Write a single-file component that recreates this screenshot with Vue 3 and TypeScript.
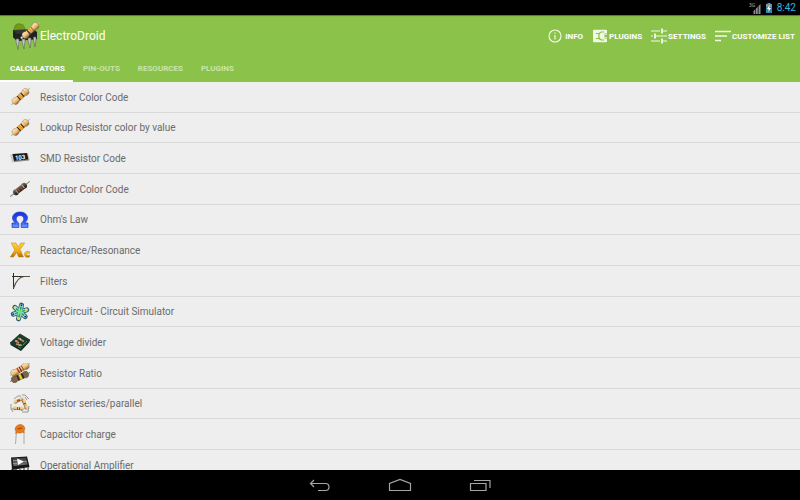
<script setup lang="ts">
import { ref } from 'vue'

interface Entry {
  icon: string
  label: string
}

const tabs: string[] = ['Calculators', 'Pin-outs', 'Resources', 'Plugins']
const activeTab = ref<string>('Calculators')

const actions: Entry[] = [
  { icon: 'info', label: 'Info' },
  { icon: 'plugins', label: 'Plugins' },
  { icon: 'settings', label: 'Settings' },
  { icon: 'sort', label: 'Customize list' },
]

const entries: Entry[] = [
  { icon: 'resistor', label: 'Resistor Color Code' },
  { icon: 'resistor', label: 'Lookup Resistor color by value' },
  { icon: 'smd', label: 'SMD Resistor Code' },
  { icon: 'inductor', label: 'Inductor Color Code' },
  { icon: 'ohm', label: "Ohm's Law" },
  { icon: 'reactance', label: 'Reactance/Resonance' },
  { icon: 'filter', label: 'Filters' },
  { icon: 'circuit', label: 'EveryCircuit - Circuit Simulator' },
  { icon: 'divider', label: 'Voltage divider' },
  { icon: 'ratio', label: 'Resistor Ratio' },
  { icon: 'series', label: 'Resistor series/parallel' },
  { icon: 'capacitor', label: 'Capacitor charge' },
  { icon: 'opamp', label: 'Operational Amplifier' },
]
</script>

<template>
  <div class="screen">
    <svg class="defs" aria-hidden="true">
      <defs>
        <linearGradient id="tan" x1="0" y1="0" x2="0" y2="1">
          <stop offset="0" stop-color="#ffe9ba" />
          <stop offset="0.55" stop-color="#edc07f" />
          <stop offset="1" stop-color="#80592c" />
        </linearGradient>
        <linearGradient id="dark" x1="0" y1="0" x2="0" y2="1">
          <stop offset="0" stop-color="#8a7a6c" />
          <stop offset="0.5" stop-color="#4a3d35" />
          <stop offset="1" stop-color="#1c1512" />
        </linearGradient>
        <linearGradient id="blue" x1="0" y1="0" x2="0" y2="1">
          <stop offset="0" stop-color="#1a2ee0" />
          <stop offset="0.6" stop-color="#2b55ff" />
          <stop offset="1" stop-color="#6f9bff" />
        </linearGradient>
        <linearGradient id="gold" x1="0" y1="0" x2="0" y2="1">
          <stop offset="0" stop-color="#ffd530" />
          <stop offset="0.6" stop-color="#f2a912" />
          <stop offset="1" stop-color="#b06a08" />
        </linearGradient>
        <linearGradient id="chip" x1="0" y1="0" x2="0" y2="1">
          <stop offset="0" stop-color="#3a3a3a" />
          <stop offset="1" stop-color="#777" />
        </linearGradient>
        <g id="bone">
          <path d="M-12.500 0H12.500" stroke="#b5b5b0" stroke-width="1" />
          <path d="M-10 0C-10-3.800-6.500-4.200-4.200-2.600H4.200C6.500-4.200 10-3.800 10 0S6.500 4.200 4.200 2.600H-4.200C-6.500 4.200-10 3.800-10 0Z" fill="url(#tan)" stroke="#8b6838" stroke-width="0.400" />
        </g>
      </defs>
    </svg>

    <div class="status">
      <svg class="signal" viewBox="0 0 12 12" aria-hidden="true">
        <text x="0" y="5" class="network">3G</text>
        <path d="M11.500 2V12H9.500V4ZM8.800 4.700V12H7V6.500ZM6.400 7V12H4.500V9Z" fill="#8c8c8c" />
      </svg>
      <svg class="battery" viewBox="0 0 8 12" aria-hidden="true">
        <path d="M2.500 1H5.500V2H7V11H1V2H2.500Z" fill="#74919c" />
        <path d="M1 5H7V11H1Z" fill="#2a89b0" />
        <path d="M4.800 2.800L2 7H3.800L3.200 10L6 6H4.200Z" fill="#fff" />
      </svg>
      <time>8:42</time>
    </div>

    <header class="header">
      <div class="toolbar">
        <h1 class="brand">
          <svg class="logo" viewBox="0 0 28 28" aria-hidden="true">
            <path d="M2 9C2 3 5 1 8 2C11 2 13 5 13 8Z" fill="#719b19" stroke="#56780f" stroke-width="0.600" />
            <path d="M5 4L4 2M10 4L11 2" stroke="#6e9618" />
            <path d="M1 8L22 7L25 10V17L5 19L1 15Z" fill="#343535" />
            <path d="M1 8L5 12L25 10V17L5 19L1 15Z" fill="#202222" />
            <path d="M4 17V20L6 27.500L7 20V17ZM10 17V20L12 27L13 20V17ZM16 16V19L18 26L19 19V16ZM21.500 15V18L23 25L24 18V15Z" fill="#c2c6bd" stroke="#5d615c" stroke-width="0.600" />
            <g transform="translate(18.500 8.500) rotate(-42)">
              <use href="#bone" />
              <path d="M-2.500-2.400V2.400" stroke="#343026" stroke-width="1.300" />
              <path d="M0-2.400V2.400" stroke="#f09c15" stroke-width="1.800" />
              <path d="M2.400-2.400V2.400" stroke="#b26920" />
            </g>
            <circle cx="9.500" cy="15.500" r="1" fill="#ddd" />
          </svg>
          <span>ElectroDroid</span>
        </h1>
        <div class="actions">
          <button v-for="action in actions" :key="action.label" class="action" type="button">
            <svg class="action-icon" viewBox="0 0 16 16" aria-hidden="true">
              <g v-if="action.icon === 'info'" fill="none" stroke="#f4faec">
                <circle cx="7" cy="8" r="6" stroke-width="1.100" />
                <path d="M7 7V11.500M7 4.500V5.700" stroke-width="1.200" />
              </g>
              <g v-else-if="action.icon === 'plugins'">
                <path d="M2 1.700H14Q15 1.700 15 2.700V5H12.500V11H15V13.300Q15 14.300 14 14.300H2Q1 14.300 1 13.300V2.700Q1 1.700 2 1.700Z" fill="#f0f7e7" />
                <path d="M4 5.500H6.800M4 10.500H6.800M12 4H9.500Q6.800 4.500 6.800 8T9.500 12H12" fill="none" stroke="#8bc34a" stroke-width="1.200" />
                <path d="M12.500 6.200H15M12.500 9.800H15" stroke="#f0f7e7" stroke-width="1.300" />
              </g>
              <g v-else-if="action.icon === 'settings'" fill="none" stroke="#f4faec">
                <path d="M0 3H9M12 3H16M0 8H2M5 8H16M0 13H9M12 13H16" stroke-width="1.200" />
                <path d="M11 0.500V5.500M4 5.500V10.500M11 10.500V15.500" stroke-width="1.800" />
              </g>
              <path v-else d="M0 3.500H16M0 8H12M0 12.500H6" fill="none" stroke="#f4faec" stroke-width="1.600" />
            </svg>
            <span>{{ action.label }}</span>
          </button>
        </div>
      </div>
      <nav class="tabs" aria-label="Sections">
        <button
          v-for="tab in tabs"
          :key="tab"
          type="button"
          class="tab"
          :class="{ active: tab === activeTab }"
          @click="activeTab = tab"
        >
          {{ tab }}
        </button>
      </nav>
    </header>

    <main class="content">
      <ul class="list">
        <li v-for="entry in entries" :key="entry.label" class="item">
          <button class="entry" type="button">
            <svg class="entry-icon" viewBox="0 0 20 20" aria-hidden="true">
              <g v-if="entry.icon === 'resistor'" transform="translate(10.500 9.500) rotate(-42)">
                <use href="#bone" />
                <path d="M-2.200-2.500V2.500M2.500-2.500V2.500" stroke="#352411" stroke-width="1.200" />
                <path d="M0-2.600V2.600" stroke="#f49b12" stroke-width="2.200" />
                <path d="M6-3V3" stroke="#d9a548" stroke-width="0.800" />
              </g>
              <g v-else-if="entry.icon === 'smd'">
                <path d="M0 6.500L18 5L20 12L2 14.500Z" fill="#c9cac8" />
                <path d="M2.500 6L17 5L18.500 11.500L4 13Z" fill="#191919" />
                <text x="5" y="11.500" class="smd-code" transform="rotate(-5 10 10)">103</text>
                <path d="M4 13.500L19 12" stroke="#777" stroke-width="0.800" />
              </g>
              <g v-else-if="entry.icon === 'inductor'" transform="translate(10 10) rotate(-38)">
                <path d="M-12.500 0H12.500" stroke="#777" />
                <path d="M-8 0C-8-3.300-5-3.600-3.500-2.600H3.500C5-3.600 8-3.300 8 0S5 3.600 3.500 2.600H-3.500C-5 3.600-8 3.300-8 0Z" fill="url(#dark)" />
                <path d="M-4-2.500V2.500" stroke="#c49b70" />
                <path d="M-1.500-2V2M1.500-2V2" stroke="#a84b3c" />
                <path d="M4-2V2" stroke="#d8b286" />
              </g>
              <path v-else-if="entry.icon === 'ohm'" d="M2 17.500V13H5.500C0 9 2.500 2 10 2S20 9 14.500 13H18V17.500H11.200V13.200C15.500 10 14 5.500 10 5.500S4.500 10 8.800 13.200V17.500Z" fill="url(#blue)" stroke="#2036b4" stroke-width="0.700" />
              <g v-else-if="entry.icon === 'reactance'" fill="url(#gold)" stroke="#b87b16" stroke-width="0.500">
                <path d="M1.300 3H6L8 6.900L10.800 3H14.700L10 9.500L13.500 17H8.700L6.700 12.500L3.500 17H0.300L4.800 10Z" />
                <path d="M19.500 11.500V13.500C17.500 12.500 16.800 13 16.800 14.200S18 15.800 19.500 15V17C16.500 18 14.500 16.500 14.500 14.200S16.500 10.500 19.500 11.500Z" />
              </g>
              <g v-else-if="entry.icon === 'filter'" fill="none">
                <path d="M3.500 2V18M2 5.500H20" stroke="#302c22" stroke-width="1" />
                <path d="M3.500 17C6 10 9 6 14 5.500H20" stroke="#5a5144" stroke-width="1.200" />
              </g>
              <g v-else-if="entry.icon === 'circuit'">
                <g v-for="angle in [0, 60, 120, 180, 240, 300]" :key="angle" :transform="`rotate(${angle + 12} 10 10)`">
                  <path d="M10 10V3" stroke="#315d72" stroke-width="5" stroke-linecap="round" />
                </g>
                <g v-for="angle in [0, 60, 120, 180, 240, 300]" :key="angle + 1" :transform="`rotate(${angle + 12} 10 10)`">
                  <path d="M10 10V3.500" stroke="#b4eedf" stroke-width="3.200" stroke-linecap="round" />
                  <path d="M10 9V4.500" stroke="#26a353" stroke-width="1.700" />
                  <circle cx="10" cy="3" r="1" :fill="angle % 120 ? '#e6dd3a' : '#173776'" />
                </g>
                <circle cx="10" cy="10" r="2.200" fill="#65e58b" />
              </g>
              <g v-else-if="entry.icon === 'divider'">
                <path d="M0 11L10 2L20 8L11 18Z" fill="#173f2b" stroke="#17251d" stroke-width="0.700" />
                <path d="M0.500 11.500L11 17L19.500 8.500V10L11 19L0.500 13Z" fill="#102a1b" />
                <path d="M5 8.500L9 11M8 6L14 9.500M6 12L12 13.500" stroke="#c08c66" stroke-width="1.500" />
                <path d="M6 9.300L7 8.300M10 7.300L11 6.600M9 13.700L10 12.700" stroke="#fff0a8" />
                <path d="M13 13L17 9M8 15L11 16.500" stroke="#55905c" stroke-width="0.800" />
              </g>
              <g v-else-if="entry.icon === 'ratio'">
                <g transform="translate(10 6.500) rotate(-31)">
                  <use href="#bone" />
                  <path d="M-2-2.500V2.500" stroke="#d42a1b" stroke-width="1.500" />
                  <path d="M0.500-2.500V2.500" stroke="#392515" stroke-width="1" />
                  <path d="M3-2.500V2.500" stroke="#bb421d" />
                </g>
                <g transform="translate(10 14) rotate(-24)">
                  <path d="M-12 0H12" stroke="#777" />
                  <path d="M-9 0C-9-3.500-6-3.900-4-2.600H4C6-3.900 9-3.500 9 0S6 3.900 4 2.600H-4C-6 3.900-9 3.500-9 0Z" fill="#7d6544" stroke="#4b3a24" stroke-width="0.500" />
                  <path d="M-2-2.600V2.600M3-2.600V2.600" stroke="#261d13" stroke-width="1.300" />
                  <path d="M0.500-2.600V2.600" stroke="#ead52b" stroke-width="2" />
                </g>
              </g>
              <g v-else-if="entry.icon === 'series'">
                <path d="M4 5L8 2H11M12 1H15L19 5M1 10V15H5M1 15L3 18M12 18H18L19 12M17 6L15 3" fill="none" stroke="#969894" stroke-width="1" />
                <g transform="translate(8.500 6.500) rotate(-28) scale(0.480)">
                  <use href="#bone" />
                  <path d="M-2-2.500V2.500M2-2.500V2.500" stroke="#462913" stroke-width="1.500" />
                  <path d="M0-2.500V2.500" stroke="#d54019" stroke-width="1.500" />
                </g>
                <g transform="translate(8.500 14.500) rotate(4) scale(0.500)">
                  <use href="#bone" />
                  <path d="M-2-2.500V2.500M2-2.500V2.500" stroke="#462913" stroke-width="1.500" />
                </g>
                <g transform="translate(15 10.500) rotate(68) scale(0.520)">
                  <use href="#bone" />
                  <path d="M-2-2.500V2.500" stroke="#462913" stroke-width="1.500" />
                  <path d="M1-2.500V2.500" stroke="#d5a019" stroke-width="2" />
                </g>
              </g>
              <g v-else-if="entry.icon === 'capacitor'">
                <path d="M6.500 7L5.500 20M14 7V20" fill="none" stroke="#aaa" stroke-width="1" />
                <ellipse cx="10" cy="4.800" rx="4.800" ry="4.200" fill="#e77b18" stroke="#bb570b" stroke-width="0.500" transform="rotate(-12 10 5)" />
                <path d="M6.500 6.500L6 10M13 6.500L14 9" stroke="#df7718" stroke-width="1.500" />
                <path d="M7.500 4.800L12 4.100" stroke="#a74c0c" stroke-width="1.200" />
              </g>
              <g v-else>
                <path d="M2 14V17M6 14V17M10 14V17M14 13V16M18 12V15" stroke="#888" stroke-width="1.800" />
                <path d="M1 2.500L17 1.500L19.500 12L2 15Z" fill="#171819" />
                <path d="M2.500 3.500L16 2.500L17.500 9.500L3.500 11Z" fill="url(#chip)" />
                <path d="M7 3.500L14 6.500L8 10Z" fill="#fff" />
                <path d="M3 5.500H7M3 8.500H7M14 6.500H17" stroke="#a8a8a8" stroke-width="0.700" />
              </g>
            </svg>
            <span>{{ entry.label }}</span>
          </button>
        </li>
      </ul>
    </main>

    <nav class="system" aria-label="System">
      <button type="button" aria-label="Back">
        <svg viewBox="0 0 24 16"><path d="M6 3L2.500 6.500L6 10M2.500 6.500H17.500Q21 6.500 21 10T17.500 13.500H10" /></svg>
      </button>
      <button type="button" aria-label="Home">
        <svg viewBox="0 0 24 16"><path d="M1.500 13.500V6.500L12 2.500L22.500 6.500V13.500Z" /></svg>
      </button>
      <button type="button" aria-label="Recent apps">
        <svg viewBox="0 0 24 16"><path d="M2.500 6.500H18V13.500H2.500ZM6 3.500H22V11" /></svg>
      </button>
    </nav>
  </div>
</template>

<style>
body {
  margin: 0;
}
</style>

<style scoped>
.screen {
  display: flex;
  flex-direction: column;
  height: 100vh;
  background: #eee;
  font-family: Roboto, "Liberation Sans", sans-serif;
}

.defs {
  position: absolute;
  width: 0;
  height: 0;
}

button {
  margin: 0;
  padding: 0;
  border: 0;
  background: none;
  font: inherit;
  color: inherit;
  cursor: pointer;
}

svg {
  display: block;
  flex: none;
}

.status {
  display: flex;
  flex: none;
  align-items: center;
  justify-content: flex-end;
  gap: 4px;
  height: 15px;
  padding-right: 4px;
  background: #000;
  color: #33b5e5;
  font-size: 10px;
}

.signal {
  width: 12px;
  height: 12px;
}

.battery {
  width: 8px;
  height: 12px;
}

.network {
  fill: #aaa;
  font-size: 5px;
}

.header {
  flex: none;
  background: #8bc34a;
  color: #fff;
  box-shadow: inset 0 2px 1px -1px #55782e;
}

.toolbar {
  display: flex;
  align-items: center;
  justify-content: space-between;
  height: 42px;
  padding: 0 5px 0 12px;
}

.brand {
  display: flex;
  align-items: center;
  margin: 0;
  font-size: 12px;
  line-height: 16px;
  font-weight: 400;
}

.logo {
  width: 28px;
  height: 28px;
}

.actions {
  display: flex;
  gap: 9px;
}

.action {
  display: flex;
  align-items: center;
  gap: 1px;
  font-size: 8px;
  font-weight: 700;
  text-transform: uppercase;
}

.action-icon {
  width: 16px;
  height: 16px;
}

.tabs {
  display: flex;
  height: 25px;
}

.tab {
  padding: 0 8px 0 10px;
  border-bottom: 2px solid transparent;
  color: #c9e3aa;
  font-size: 8px;
  font-weight: 700;
  text-transform: uppercase;
}

.tab.active {
  border-bottom-color: #fff;
  color: #fff;
}

.content {
  flex: 1;
  min-height: 0;
  overflow-y: auto;
  scrollbar-width: none;
}

.list {
  margin: 0;
  padding: 0;
  list-style: none;
}

.item {
  box-sizing: border-box;
  height: 31px;
  border-bottom: 1px solid #d9d9d9;
}

.item:nth-child(3n + 2) {
  height: 30px;
}

.entry {
  display: flex;
  align-items: center;
  gap: 10px;
  width: 100%;
  height: 100%;
  padding: 0 10px;
  color: #6b6b6b;
  font-size: 10px;
  text-align: left;
}

.entry-icon {
  width: 20px;
  height: 20px;
}

.smd-code {
  fill: #fff;
  font-size: 6px;
  font-weight: 700;
}

.system {
  display: flex;
  flex: none;
  align-items: center;
  justify-content: center;
  gap: 56px;
  height: 30px;
  background: #000;
}

.system svg {
  width: 24px;
  height: 16px;
  fill: none;
  stroke: #a5a5a5;
  stroke-width: 1.2px;
}
</style>
